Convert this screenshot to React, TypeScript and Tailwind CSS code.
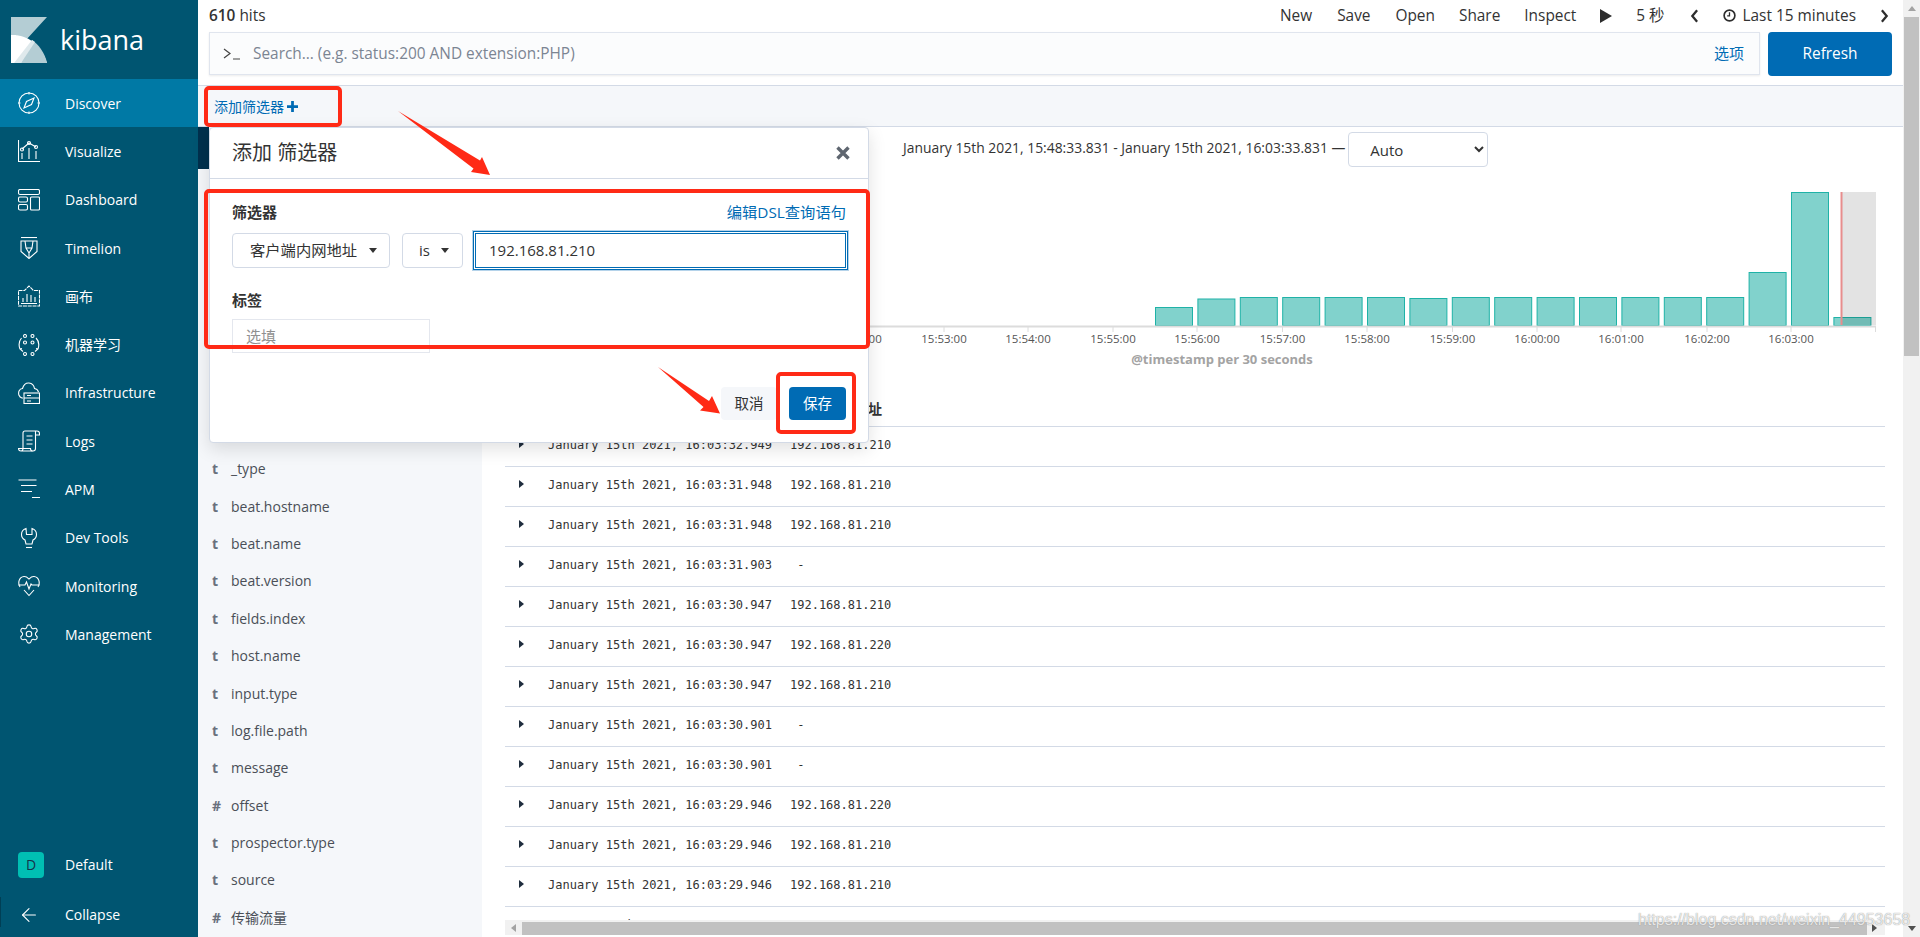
import type { ReactNode } from "react";
import { Settings, ArrowLeft } from "lucide-react";

const ic = {
  discover: (
    <>
      <circle cx="11" cy="11" r="10" />
      <path d="M11 0v2.5M11 19.5V22M0 11h2.5M19.500 11H22" />
      <path d="M16 6l-2.500 6.500L6 16l2.500-6.500z" />
    </>
  ),
  visualize: (
    <>
      <path d="M.5 0v21.500H22" />
      <path d="M4 9l7-6 7 4" />
      <circle cx="4" cy="9.500" r="1.500" />
      <circle cx="11" cy="3" r="1.500" />
      <circle cx="18" cy="7" r="1.500" />
      <path d="M4 13v6M11 8v11M18 11v8" />
    </>
  ),
  dashboard: (
    <>
      <rect x=".5" y=".5" width="21" height="5" rx="1.500" />
      <rect x=".5" y="8" width="9" height="5" rx="1.500" />
      <rect x=".5" y="15.500" width="9" height="5.500" rx="1.500" />
      <rect x="12.500" y="8" width="9" height="13" rx="1" />
    </>
  ),
  timelion: (
    <>
      <path d="M3 .5h16" />
      <path d="M3 4h16v10.500l-8 7-8-7z" />
      <path d="M7 4l1 7 3 5 3-5 1-7M8 11h6M11 16v5" />
    </>
  ),
  canvas: (
    <>
      <path d="M.5 5.500h6L11 1l4.500 4.500h6V21h-21z" strokeDasharray="4 .8" />
      <path d="M5 17v-4M9 17V9M13 17v-7M17 17v-5M3 18.500h16" />
    </>
  ),
  ml: (
    <>
      <circle cx="7" cy="2" r="1.500" />
      <circle cx="14.500" cy="2" r="1.500" />
      <circle cx="7" cy="8.500" r="1.500" />
      <circle cx="14.500" cy="8.500" r="1.500" />
      <circle cx="7" cy="20" r="1.500" />
      <circle cx="14.500" cy="20" r="1.500" />
      <path d="M3.500 4C1 7 .5 11 2 15l3 2.500M18 4c3 3 3 8 2 11l-3 2.500M2 15l2-.5M20 15l-2-.5" />
    </>
  ),
  infra: (
    <>
      <path d="M5 16H4C1 15 0 12 1 9c.7-1.500 2-2.500 3.500-2.500C5.500 3 8 .8 11 1c3 .2 5 2.500 5.500 5.500 2 .3 3.500 1.500 4 3.500" />
      <rect x="6" y="11" width="15.500" height="10.500" />
      <path d="M6 16h15.500M9 13.500h4M9 19h4" />
    </>
  ),
  logs: (
    <>
      <path d="M19 1H7C5.500 1 5 2 5 3v15.500c0 1.500-1 2.500-2 2.500h12c1.500 0 2.500-1 2.500-2.500V1" />
      <path d="M19 1c1.500 0 2.500 1 2.500 2.500V5h-4M3 21c-1.500 0-2.500-1-2.500-2.500h12c0 1.500.5 2.500 2 2.500M8.500 6h6M8.500 10h6M8.500 14h6" />
    </>
  ),
  apm: <path d="M.5 1h18M3 6.500h15.500M3 12.500h11M14 18.500h8" />,
  dev: (
    <>
      <path d="M8 1.500C5 2.500 3.500 5 3.500 7.500c0 2.500 1.500 4.500 3.500 5.500l1 4h6l1-4c2-1 3.500-3 3.500-5.500 0-2.500-1.500-5-4.500-6v6h-5.500z" />
      <path d="M8 20.500h6" />
    </>
  ),
  monitoring: (
    <>
      <path d="M2 12C-.5 8 1 2 6 1.500 8.500 1.300 10 3 11 4c1-1 2.500-2.700 5-2.500 5 .5 6.500 6.500 4 10.500" />
      <path d="M.5 10H7l1.500-3 2.500 7 2-5 1 1h7.500M6 15l5 5.500 5-5.500" />
    </>
  ),
};

const navItems: { label: string; icon: ReactNode; active?: boolean }[] = [
  { label: "Discover", icon: ic.discover, active: true },
  { label: "Visualize", icon: ic.visualize },
  { label: "Dashboard", icon: ic.dashboard },
  { label: "Timelion", icon: ic.timelion },
  { label: "画布", icon: ic.canvas },
  { label: "机器学习", icon: ic.ml },
  { label: "Infrastructure", icon: ic.infra },
  { label: "Logs", icon: ic.logs },
  { label: "APM", icon: ic.apm },
  { label: "Dev Tools", icon: ic.dev },
  { label: "Monitoring", icon: ic.monitoring },
];

const fields = [
  ["t", "_type"],
  ["t", "beat.hostname"],
  ["t", "beat.name"],
  ["t", "beat.version"],
  ["t", "fields.index"],
  ["t", "host.name"],
  ["t", "input.type"],
  ["t", "log.file.path"],
  ["t", "message"],
  ["#", "offset"],
  ["t", "prospector.type"],
  ["t", "source"],
  ["#", "传输流量"],
];

const rows = [
  ["16:03:32.949", "192.168.81.210"],
  ["16:03:31.948", "192.168.81.210"],
  ["16:03:31.948", "192.168.81.210"],
  ["16:03:31.903", " -"],
  ["16:03:30.947", "192.168.81.210"],
  ["16:03:30.947", "192.168.81.220"],
  ["16:03:30.947", "192.168.81.210"],
  ["16:03:30.901", " -"],
  ["16:03:30.901", " -"],
  ["16:03:29.946", "192.168.81.220"],
  ["16:03:29.946", "192.168.81.210"],
  ["16:03:29.946", "192.168.81.210"],
  ["16:03:29.946", "192.168.81.210"],
];

const barTops = [307, 298.5, 297, 297, 297, 297, 298, 297, 297, 297, 297, 297, 297, 297, 272, 192, 317];
const ticks = [
  [859, "15:52:00"],
  [944, "15:53:00"],
  [1028, "15:54:00"],
  [1113, "15:55:00"],
  [1197, "15:56:00"],
  [1282.5, "15:57:00"],
  [1367, "15:58:00"],
  [1452.5, "15:59:00"],
  [1537, "16:00:00"],
  [1621, "16:01:00"],
  [1707, "16:02:00"],
  [1791, "16:03:00"],
] as const;

function NavIcon({ children }: { children: ReactNode }) {
  return (
    <svg viewBox="0 0 22 22" className="w-[22px] h-[22px] shrink-0" fill="none" stroke="white" strokeWidth="1.1">
      {children}
    </svg>
  );
}

function NavRow({
  icon,
  label,
  gap = "gap-[25px]",
  className = "",
}: {
  icon: ReactNode;
  label: string;
  gap?: string;
  className?: string;
}) {
  return (
    <div className={`h-[48.3px] flex items-center pl-[18px] text-[14px] text-white ${gap} ${className}`}>
      {icon}
      <span>{label}</span>
    </div>
  );
}

function Caret({ className = "" }: { className?: string }) {
  return <span className={`w-0 h-0 border-x-[4px] border-x-transparent border-t-[5px] border-t-[#333] ${className}`} />;
}

function Chevron({ d }: { d: string }) {
  return (
    <svg viewBox="0 0 10 16" className="w-[9px] h-[14px]" fill="none" stroke="#2d2d2d" strokeWidth="2.600">
      <path d={d} />
    </svg>
  );
}

function Chart() {
  return (
    <svg viewBox="482 170 1421 200" className="w-[1421px] h-[200px] shrink-0 block">
      {barTops.map((top, i) => (
        <rect
          key={i}
          x={1155.5 + 42.4 * i}
          y={top + 0.5}
          width={37}
          height={325 - top}
          fill="#81d2cc"
          stroke="#1fb2a7"
          strokeWidth="1"
        />
      ))}
      <rect x="1841" y="192" width="35" height="133" fill="#000" fillOpacity="0.11" />
      <rect x="1840.500" y="192" width="2" height="133" fill="#e88d8d" />
      <path d="M852 326.500H1876" stroke="#dcdcdc" strokeWidth="2" />
      <path d="M1875.500 326v6" stroke="#dcdcdc" />
      {ticks.map(([x, label]) => (
        <g key={label}>
          <path d={`M${x} 327v5`} stroke="#dcdcdc" />
          <text x={x} y="343" textAnchor="middle" fontSize="11.500" fill="#555">
            {label}
          </text>
        </g>
      ))}
      <text x="1222" y="364" textAnchor="middle" fontSize="13" fontWeight="700" fill="#a3a3a3">
        @timestamp per 30 seconds
      </text>
    </svg>
  );
}

function FilterModal() {
  return (
    <div className="absolute left-[209px] top-[127px] w-[660px] h-[316px] bg-white border border-[#d3dae6] rounded-[4px] shadow-[0_6px_18px_rgba(0,0,0,0.12)] text-[#333]">
      <div className="h-[51px] border-b border-[#d3dae6] pl-[22px] pr-[18px] flex items-center justify-between">
        <h2 className="text-[20px] leading-none">添加 筛选器</h2>
        <svg viewBox="0 0 14 14" className="w-[14px] h-[14px]" stroke="#5f6670" strokeWidth="3.400">
          <path d="M1.500 1.500l11 11M12.500 1.500l-11 11" />
        </svg>
      </div>
      <div className="pl-[22px] pr-[20px] pt-[23px]">
        <div className="flex justify-between items-center text-[15px] leading-[20px]">
          <span className="font-semibold">筛选器</span>
          <span className="text-[#006bb4] text-[15.300px] pr-[2px]">编辑DSL查询语句</span>
        </div>
        <div className="flex items-center mt-[11px]">
          <div className="w-[158px] h-[35px] border border-[#d3dae6] rounded-[4px] pl-[17px] pr-[12px] flex items-center justify-between text-[15.300px]">
            客户端内网地址
            <Caret />
          </div>
          <div className="ml-[12px] w-[61px] h-[35px] border border-[#d3dae6] rounded-[4px] pl-[16px] pr-[13px] flex items-center justify-between text-[15px]">
            is
            <Caret />
          </div>
          <div className="ml-[12px] w-[371px] h-[35px] border border-[#006bb4] shadow-[0_0_0_1px_#fff,0_0_0_2px_#006bb4,0_0_0_3px_#b5d3ea] flex items-center pl-[13px] text-[15px]">
            192.168.81.210
          </div>
        </div>
        <div className="text-[15px] leading-[20px] font-semibold mt-[22px]">标签</div>
        <div className="mt-[9px] w-[198px] h-[34px] border border-[#e4e7ee] flex items-center pl-[13px] text-[15px] text-[#909090]">
          选填
        </div>
        <div className="flex justify-end mt-[34px] pr-[2px] text-[14.500px]">
          <div className="w-[56px] h-[33px] bg-[#f5f7fa] rounded-[4px] flex items-center justify-center">取消</div>
          <div className="ml-[12px] w-[57px] h-[33px] bg-[#006bb4] text-white rounded-[4px] flex items-center justify-center">
            保存
          </div>
        </div>
      </div>
    </div>
  );
}

function Annotations() {
  const box = "absolute border-[4px] border-[#ff2a16] rounded-[5px] pointer-events-none";
  return (
    <>
      <div className={`${box} left-[204px] top-[86px] w-[138px] h-[41px]`} />
      <div className={`${box} left-[204px] top-[189px] w-[666px] h-[160px]`} />
      <div className={`${box} left-[776px] top-[372px] w-[80px] h-[62px]`} />
      <svg viewBox="0 0 1920 937" className="absolute inset-0 w-[1920px] h-[937px] pointer-events-none" fill="#ff2a16">
        <polygon points="398,111 480,160.500 482,157 490,175 471,172 473.500,168.500" />
        <polygon points="658,367 709,401 712,396 720,413.500 700,410.500 703.500,407" />
      </svg>
    </>
  );
}

export default function App() {
  return (
    <div className="relative w-[1920px] h-[937px] overflow-hidden flex bg-white text-[#333] text-[14px] font-['Open_Sans','Noto_Sans_CJK_SC',sans-serif]">
      {/* side nav */}
      <aside className="w-[198px] shrink-0 bg-[#005571] flex flex-col">
        <div className="h-[79px] flex items-center pl-[11px] gap-[13px]">
          <svg viewBox="0 0 36 46" className="w-[36px] h-[46px] shrink-0">
            <path d="M0 0h36L14.500 23.500C10 19.500 5 18 0 18z" fill="#b4cdd4" />
            <path d="M0 18c14-1 30 8 36 28H0z" fill="#fff" />
            <path d="M36 46C34 36 28 28 21 23L10 46z" fill="#b4cdd4" />
            <path d="M21 23L3 46h7l14-21z" fill="#dfe9ec" />
          </svg>
          <span className="text-[27px] font-medium text-white leading-none">kibana</span>
        </div>
        {navItems.map((item) => (
          <NavRow
            key={item.label}
            label={item.label}
            icon={<NavIcon>{item.icon}</NavIcon>}
            className={item.active ? "bg-[#0079a5]" : ""}
          />
        ))}
        <NavRow label="Management" icon={<Settings className="w-[22px] h-[22px] shrink-0" strokeWidth={1.200} />} />
        <div className="flex-1" />
        <NavRow
          label="Default"
          gap="gap-[21px]"
          className="mb-[2px]"
          icon={
            <span className="w-[26px] h-[26px] rounded-[4px] bg-[#00bfb3] text-[#16324a] flex items-center justify-center">
              D
            </span>
          }
        />
        <div className="relative mb-[-2px]">
          <span className="absolute left-0 top-[6px] w-px h-[30px] bg-[#003f55]" />
          <NavRow label="Collapse" icon={<ArrowLeft className="w-[22px] h-[22px] shrink-0" strokeWidth={1.200} />} />
        </div>
      </aside>

      <div className="flex-1 min-w-0 flex flex-col">
        {/* top bar */}
        <div className="h-[86px] shrink-0 border-b border-[#d3dae6] pl-[11px] pr-[14px] text-[15.400px]">
          <div className="h-[32px] flex items-center justify-between">
            <div>
              <b className="font-semibold">610</b> hits
            </div>
            <div className="flex items-center">
              <span>New</span>
              <span className="ml-[25px]">Save</span>
              <span className="ml-[25px]">Open</span>
              <span className="ml-[24px]">Share</span>
              <span className="ml-[24px]">Inspect</span>
              <svg viewBox="0 0 12 14" className="ml-[24px] w-[12px] h-[14px]" fill="#2d2d2d">
                <path d="M0 0l12 7-12 7z" />
              </svg>
              <span className="ml-[24px]">5 秒</span>
              <span className="ml-[25px] flex">
                <Chevron d="M8 1.500L2.500 8 8 14.500" />
              </span>
              <svg viewBox="0 0 14 14" className="ml-[24px] w-[13px] h-[13px]" fill="none" stroke="#2d2d2d" strokeWidth="1.800">
                <circle cx="7" cy="7" r="5.800" />
                <path d="M7 3.500V7.500H4.500" strokeWidth="1.400" />
              </svg>
              <span className="ml-[7px]">Last 15 minutes</span>
              <span className="ml-[24px] flex">
                <Chevron d="M2 1.500L7.500 8 2 14.500" />
              </span>
            </div>
          </div>
          <div className="flex">
            <div className="shrink-0 w-[1551px] h-[43px] bg-[#fbfcfd] border border-[#e0e5ee] shadow-[0_1px_2px_rgba(0,0,0,0.08)] flex items-center pl-[13px] pr-[15px]">
              <svg viewBox="0 0 17 12" className="w-[17px] h-[12px] shrink-0" fill="none" stroke="#444" strokeWidth="1.200">
                <path d="M1 1l6 4.500L1 10M10 11h7" />
              </svg>
              <span className="ml-[13px] text-[#7b8593]">Search... (e.g. status:200 AND extension:PHP)</span>
              <span className="ml-auto text-[#006bb4] text-[15px]">选项</span>
            </div>
            <div className="shrink-0 ml-[8px] w-[124px] h-[44px] bg-[#006bb4] rounded-[4px] text-white flex items-center justify-center">
              Refresh
            </div>
          </div>
        </div>

        {/* filter bar */}
        <div className="h-[41px] shrink-0 bg-[#f5f7fa] border-b border-[#d3dae6] pl-[16px] flex items-center text-[#006bb4] text-[14px]">
          添加筛选器
          <svg viewBox="0 0 12 12" className="ml-[3px] w-[11px] h-[11px]" stroke="#006bb4" strokeWidth="3">
            <path d="M6 0v12M0 6h12" />
          </svg>
        </div>

        <div className="flex-1 min-h-0 flex">
          {/* field list */}
          <div className="w-[284px] shrink-0 bg-[#f5f7fa] overflow-hidden">
            <div className="w-[11px] h-[42px] bg-[#00304d]" />
            <div className="pt-[281px]">
              {fields.map(([type, name]) => (
                <div key={name} className="h-[37.400px] flex items-center text-[#4a4f57]">
                  <span className="w-[33px] pl-[14px] font-bold text-[#69707d]">{type}</span>
                  <span>{name}</span>
                </div>
              ))}
            </div>
          </div>

          {/* results */}
          <div className="flex-1 min-w-0 flex flex-col">
            <div className="h-[43px] shrink-0 flex items-start pl-[421px] pt-[5px]">
              <span className="leading-[32px] text-[13.880px]">
                January 15th 2021, 15:48:33.831 - January 15th 2021, 16:03:33.831 —
              </span>
              <select
                defaultValue="Auto"
                className="ml-[3px] w-[140px] h-[35px] border border-[#d3dae6] rounded-[4px] bg-white pl-[17px] pt-[1px] appearance-auto text-[15px]"
              >
                <option>Auto</option>
              </select>
            </div>
            <Chart />
            <div className="relative flex-1 min-h-0">
              <div className="h-[57px] ml-[23px] w-[1380px] border-b border-[#d3dae6] flex items-center justify-end pr-[1003px] font-semibold pt-[20px]">
                客户端内网地址
              </div>
              {rows.map(([time, ip], i) => (
                <div
                  key={i}
                  className="h-10 ml-[23px] w-[1380px] border-b border-[#d3dae6] flex items-center font-['DejaVu_Sans_Mono',monospace] text-[12px] text-[#333] pb-[4px]"
                >
                  <svg viewBox="0 0 5 8" className="ml-[14px] w-[5px] h-[8px] mb-[1px]" fill="#1f2d3d">
                    <path d="M0 0l5 4-5 4z" />
                  </svg>
                  <span className="ml-[24px] whitespace-pre">January 15th 2021, {time}</span>
                  <span className="ml-[18px] whitespace-pre">{ip}</span>
                </div>
              ))}
              {/* table scrollbar */}
              <div className="absolute left-[23px] bottom-[2px] w-[1380px] h-[15px] bg-[#f1f1f1] flex items-center">
                <span className="w-0 h-0 ml-[6px] border-y-[4px] border-y-transparent border-r-[5px] border-r-[#a3a3a3]" />
                <div className="ml-[6px] w-[1345px] h-[13px] mt-[2px] bg-[#c1c1c1]" />
                <span className="w-0 h-0 ml-[5px] border-y-[4px] border-y-transparent border-l-[5px] border-l-[#505050]" />
              </div>
            </div>
          </div>
        </div>
      </div>

      {/* page scrollbar */}
      <div className="w-[17px] shrink-0 bg-[#f1f1f1] flex flex-col items-center">
        <span className="mt-[6px] w-0 h-0 border-x-[4px] border-x-transparent border-b-[5px] border-b-[#a3a3a3]" />
        <div className="mt-[6px] w-[15px] h-[339px] bg-[#c1c1c1]" />
        <span className="mt-auto mb-[6px] w-0 h-0 border-x-[4px] border-x-transparent border-t-[5px] border-t-[#505050]" />
      </div>

      <FilterModal />
      <Annotations />

      <span className="absolute left-[1638px] top-[908px] text-[16px] font-['Liberation_Sans',sans-serif] text-white/80 [text-shadow:0_0_1px_#777]">
        https://blog.csdn.net/weixin_44953658
      </span>
    </div>
  );
}
